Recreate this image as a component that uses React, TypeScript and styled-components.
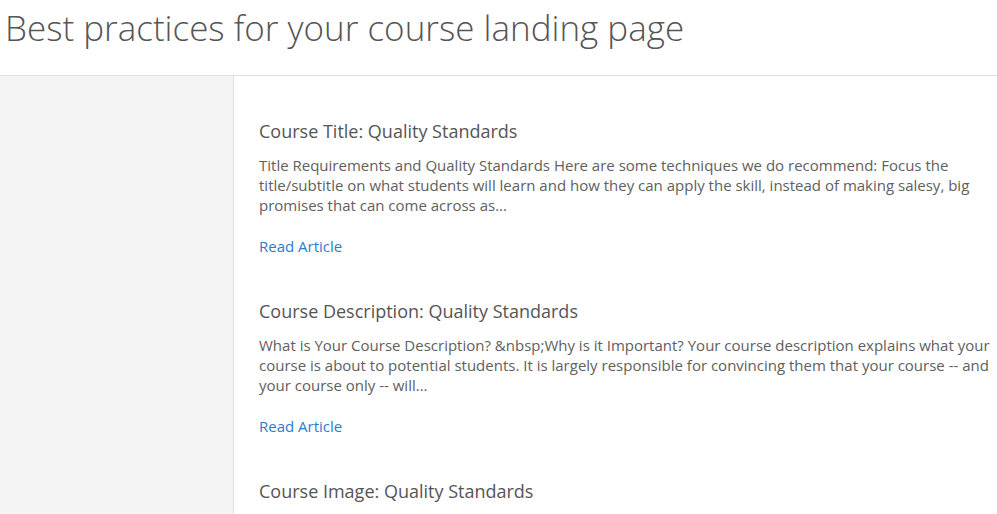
import React from "react";
import styled, { createGlobalStyle } from "styled-components";

const GlobalStyle = createGlobalStyle`
  body {
    margin: 0;
    font-family: "Open Sans", "Liberation Sans", sans-serif;
    background: #fff;
  }
`;

const articles = [
  {
    title: "Course Title: Quality Standards",
    excerpt:
      "Title Requirements and Quality Standards Here are some techniques we do recommend: Focus the title/subtitle on what students will learn and how they can apply the skill, instead of making salesy, big promises that can come across as...",
  },
  {
    title: "Course Description: Quality Standards",
    excerpt:
      "What is Your Course Description? &nbsp;Why is it Important? Your course description explains what your course is about to potential students. It is largely responsible for convincing them that your course -- and your course only -- will...",
  },
  {
    title: "Course Image: Quality Standards",
    excerpt:
      "Course Image Requirements and Quality Standards Your course image is the first thing students see when browsing courses, so it needs to be attractive and professional...",
  },
];

const Page = styled.div`
  height: 514px;
  display: flex;
  flex-direction: column;
  overflow: hidden;
`;

const Header = styled.header`
  height: 75px;
  border-bottom: 1px solid #e0e0e0;
  padding-left: 5px;
  h1 {
    margin: 0;
    padding-top: 7px;
    font-size: 35px;
    font-weight: 300;
    line-height: 42px;
    color: #555;
  }
`;

const Body = styled.div`
  flex: 1;
  display: flex;
  min-height: 0;
`;

const Sidebar = styled.aside`
  width: 233px;
  flex: 0 0 233px;
  background: #f4f4f4;
  border-right: 1px solid #e2e2e2;
`;

const Content = styled.main`
  flex: 1;
  padding: 43px 0 0 25px;
`;

const Article = styled.section`
  margin-bottom: 42px;
  h2 {
    margin: 0;
    font-size: 18px;
    font-weight: 400;
    line-height: 24px;
    color: #555;
  }
  p {
    margin: 12px 0 0;
    font-size: 15px;
    line-height: 20px;
    color: #606060;
  }
  a {
    display: inline-block;
    margin-top: 21px;
    font-size: 15px;
    line-height: 20px;
    color: #2a7ccf;
    text-decoration: none;
  }
`;

const App = () => {
  return (
    <Page>
      <GlobalStyle />
      <Header>
        <h1>Best practices for your course landing page</h1>
      </Header>
      <Body>
        <Sidebar />
        <Content>
          {articles.map((a) => (
            <Article key={a.title}>
              <h2>{a.title}</h2>
              <p>{a.excerpt}</p>
              <a href="#">Read Article</a>
            </Article>
          ))}
        </Content>
      </Body>
    </Page>
  );
};

export default App;
